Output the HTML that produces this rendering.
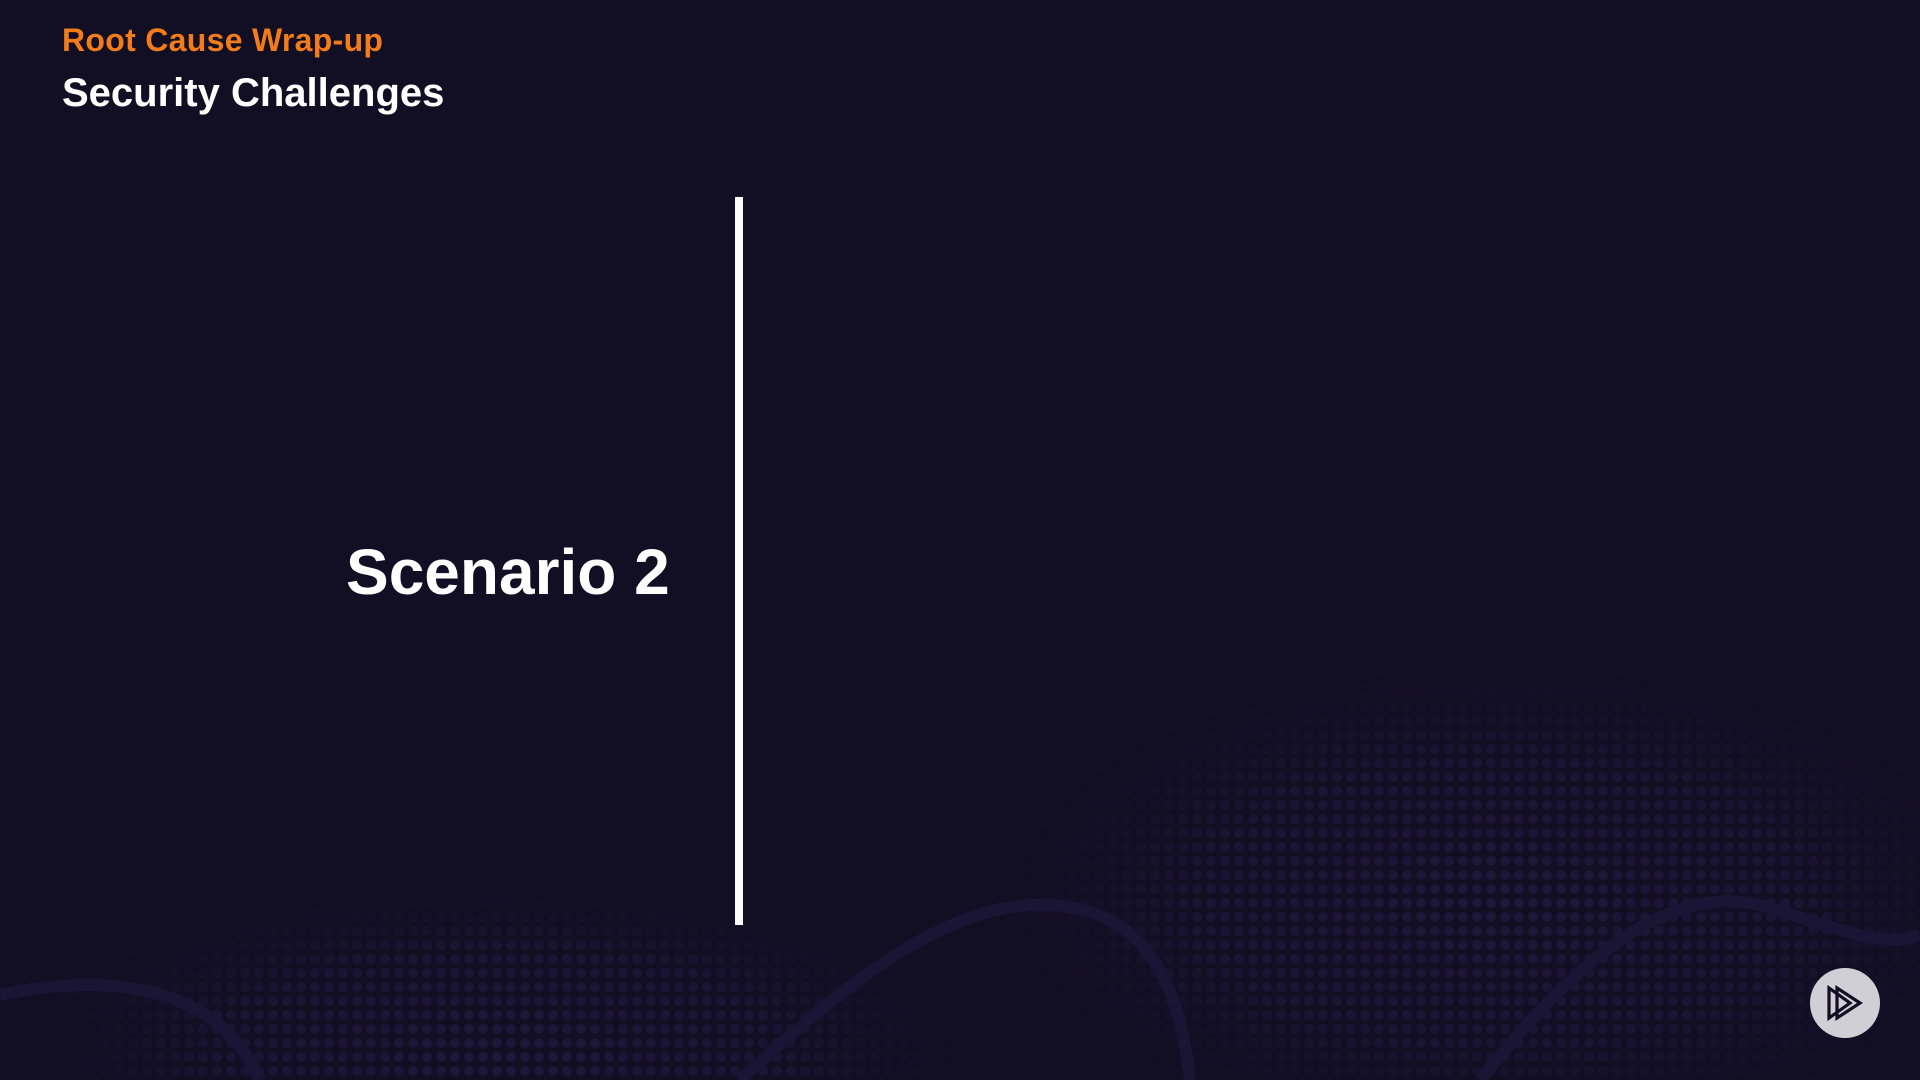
<!DOCTYPE html>
<html><head><meta charset="utf-8"><style>
html,body{margin:0;padding:0}
body{width:1920px;height:1080px;background:#120e23;position:relative;overflow:hidden;font-family:"Liberation Sans",sans-serif;font-weight:bold}
.t1{position:absolute;left:62px;top:22px;font-size:32px;color:#f27b1a;letter-spacing:0.3px}
.t2{position:absolute;left:62px;top:71px;font-size:40px;color:#fff}
.sc{position:absolute;left:346px;top:535px;font-size:64px;color:#fff}
.ln{position:absolute;left:735px;top:197px;width:8px;height:728px;background:#fff}
.logo{position:absolute;left:1810px;top:968px;width:70px;height:70px;border-radius:50%;background:#d1cfd6}
svg.bg{position:absolute;left:0;top:0}
</style></head><body>
<svg class="bg" width="1920" height="1080">
<defs><pattern id="d" width="14" height="14" patternUnits="userSpaceOnUse"><circle cx="7" cy="7" r="5" fill="#1d1739"/></pattern>
<radialGradient id="g" cx="0.5" cy="0.5" r="0.5"><stop offset="0" stop-color="#fff" stop-opacity="1"/><stop offset="0.6" stop-color="#fff" stop-opacity="0.8"/><stop offset="1" stop-color="#fff" stop-opacity="0"/></radialGradient>
<mask id="m"><ellipse cx="1500" cy="900" rx="480" ry="230" fill="url(#g)"/><ellipse cx="500" cy="1050" rx="450" ry="160" fill="url(#g)"/></mask></defs>
<rect width="1920" height="1080" fill="url(#d)" mask="url(#m)"/>
<path d="M0 995 C120 970 220 990 260 1080" stroke="#1b1535" stroke-width="12" fill="none"/>
<path d="M740 1080 C850 980 950 900 1050 905 C1150 910 1180 990 1190 1080" stroke="#1b1535" stroke-width="12" fill="none"/>
<path d="M1480 1080 C1560 980 1660 880 1760 905 C1830 925 1880 950 1920 935" stroke="#1b1535" stroke-width="12" fill="none"/>
</svg>
<div class="t1">Root Cause Wrap-up</div>
<div class="t2">Security Challenges</div>
<div class="sc">Scenario 2</div>
<div class="ln"></div>
<div class="logo"><svg width="70" height="70" viewBox="0 0 70 70"><path d="M19 20 L19 50 L40 35 Z M27 20 L27 50 L50 35 Z" stroke="#120e23" stroke-width="3.2" fill="none" stroke-linejoin="miter"/></svg></div>
</body></html>
